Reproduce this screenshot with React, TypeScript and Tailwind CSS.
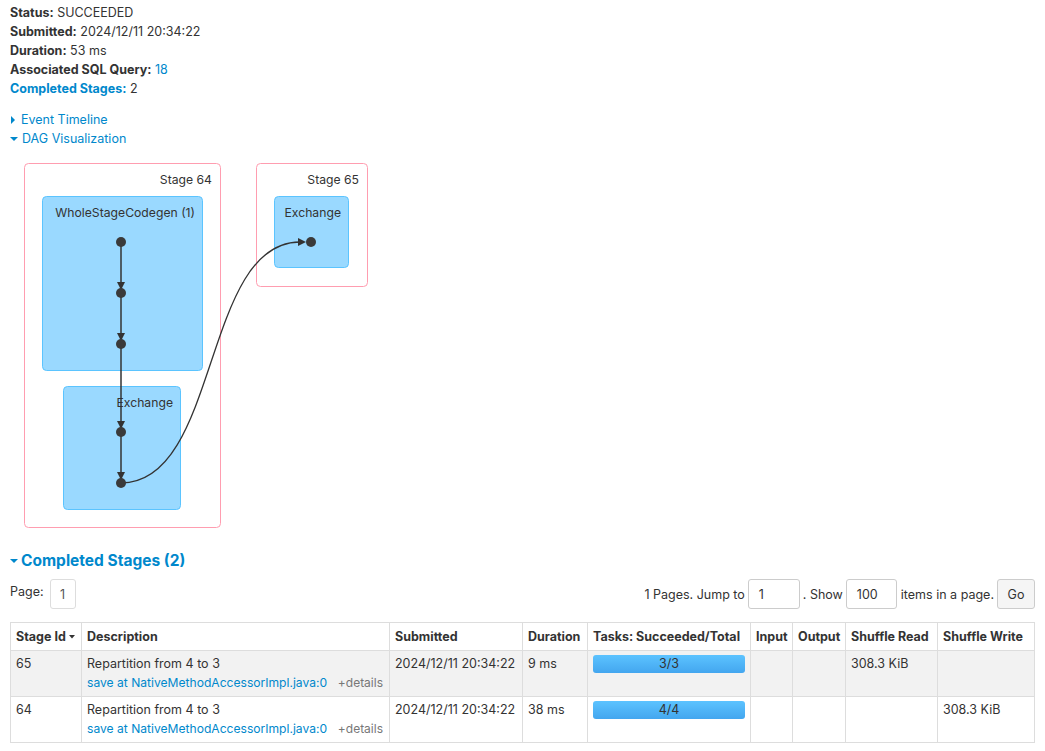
import React from "react";

const stages = [
  {
    id: "65",
    description: "Repartition from 4 to 3",
    callSite: "save at NativeMethodAccessorImpl.java:0",
    submitted: "2024/12/11 20:34:22",
    duration: "9 ms",
    tasks: "3/3",
    shuffleRead: "308.3 KiB",
    shuffleWrite: "",
  },
  {
    id: "64",
    description: "Repartition from 4 to 3",
    callSite: "save at NativeMethodAccessorImpl.java:0",
    submitted: "2024/12/11 20:34:22",
    duration: "38 ms",
    tasks: "4/4",
    shuffleRead: "",
    shuffleWrite: "308.3 KiB",
  },
];

const DownArrow = () => (
  <svg width="8" height="6" viewBox="0 0 8 6" className="inline-block">
    <polygon points="0,1 8,1 4,5" fill="currentColor" />
  </svg>
);

const RightArrow = () => (
  <svg width="6" height="8" viewBox="0 0 6 8" className="inline-block">
    <polygon points="1,0 5,4 1,8" fill="currentColor" />
  </svg>
);

function Arrow({ x, y }: { x: number; y: number }) {
  // tip at (x, y), pointing down
  return <polygon points={`${x - 4},${y - 8} ${x + 4},${y - 8} ${x},${y}`} fill="#333" />;
}

function DagViz() {
  const nodes = [94, 145, 196, 284, 335];
  return (
    <svg width="370" height="385" className="block" style={{ fontFamily: "Inter, 'Liberation Sans', sans-serif" }}>
      {/* stage 64 */}
      <rect x="14.5" y="15.5" width="196" height="364" rx="4" fill="#fff" stroke="#FF9DB0" />
      <text x="202" y="36" textAnchor="end" fontSize="12.2" fill="#333">Stage 64</text>
      <rect x="32.5" y="48.5" width="160" height="174" rx="4" fill="#9AD9FF" stroke="#5BC4FF" />
      <text x="185" y="69" textAnchor="end" fontSize="12.2" fill="#333">WholeStageCodegen (1)</text>
      <rect x="53.5" y="238.5" width="117" height="123" rx="4" fill="#9AD9FF" stroke="#5BC4FF" />
      <text x="163" y="259" textAnchor="end" fontSize="12.2" fill="#333">Exchange</text>

      {/* stage 65 */}
      <rect x="246.5" y="15.5" width="111" height="123" rx="4" fill="#fff" stroke="#FF9DB0" />
      <text x="349" y="36" textAnchor="end" fontSize="12.2" fill="#333">Stage 65</text>
      <rect x="264.5" y="48.5" width="74" height="71" rx="4" fill="#9AD9FF" stroke="#5BC4FF" />
      <text x="331" y="69" textAnchor="end" fontSize="12.2" fill="#333">Exchange</text>

      {/* edges */}
      {nodes.slice(0, -1).map((y, i) => (
        <g key={y}>
          <line x1="111" y1={y} x2="111" y2={nodes[i + 1] - 6} stroke="#333" strokeWidth="1.5" />
          <Arrow x={111} y={nodes[i + 1] - 3} />
        </g>
      ))}
      <path d="M111,335 C210,335 192,94 290,94" fill="none" stroke="#333" strokeWidth="1.3" />
      <polygon points="288,90 296,94 288,98" fill="#333" />

      {/* nodes */}
      {nodes.map((y) => (
        <circle key={y} cx="111" cy={y} r="5" fill="#3a3a3a" />
      ))}
      <circle cx="301" cy="94" r="5" fill="#3a3a3a" />
    </svg>
  );
}

export default function App() {
  const th = "border border-[#dddddd] px-[5px] text-left font-bold whitespace-nowrap";
  const td = "border border-[#dddddd] px-[5px] pt-[3px] align-top whitespace-nowrap";
  return (
    <div
      className="px-[10px] pt-[3px] text-[12.5px] leading-[19px] text-[#333]"
      style={{ fontFamily: "Inter, 'Liberation Sans', sans-serif" }}
    >
      {/* summary */}
      <ul>
        <li>
          <strong>Status:</strong> SUCCEEDED
        </li>
        <li>
          <strong>Submitted:</strong> 2024/12/11 20:34:22
        </li>
        <li>
          <strong>Duration:</strong> 53 ms
        </li>
        <li>
          <strong>Associated SQL Query:</strong> <span className="text-[#0088cc]">18</span>
        </li>
        <li>
          <strong className="text-[#0088cc]">Completed Stages:</strong> 2
        </li>
      </ul>

      <div className="mt-[12px] text-[#0088cc]">
        <div className="flex items-center gap-[5px]">
          <RightArrow />
          <span>Event Timeline</span>
        </div>
        <div className="flex items-center gap-[4px]">
          <DownArrow />
          <span>DAG Visualization</span>
        </div>
      </div>

      <DagViz />

      {/* completed stages */}
      <h4 className="mt-[18px] flex items-center gap-[3px] text-[15.5px] font-bold leading-[20px] text-[#0088cc]">
        <DownArrow />
        <span>Completed Stages (2)</span>
      </h4>

      <div className="mt-[8px] flex items-center justify-between">
        <div className="flex items-center gap-[6px]">
          <span className="-mt-[5px]">Page:</span>
          <span className="flex h-[30px] w-[26px] items-center justify-center rounded-[3px] border border-[#dddddd] text-[#555]">
            1
          </span>
        </div>
        <div className="flex items-center">
          <span>1 Pages. Jump to</span>
          <span className="ml-[3px] flex h-[30px] w-[52px] items-center rounded-[3px] border border-[#cccccc] px-[10px]">1</span>
          <span className="ml-[3px]">. Show</span>
          <span className="ml-[3px] flex h-[30px] w-[51px] items-center rounded-[3px] border border-[#cccccc] px-[10px]">100</span>
          <span className="ml-[4px]">items in a page.</span>
          <span className="ml-[3px] flex h-[30px] w-[38px] items-center justify-center rounded-[3px] border border-[#cccccc] bg-[#f5f5f5]">
            Go
          </span>
        </div>
      </div>

      <table className="mt-[13px] w-full table-fixed border-collapse">
        <thead>
          <tr className="h-[28px]">
            <th className={`${th} w-[71px]`}>
              <span className="flex items-center gap-[3px]">
                Stage Id
                <svg width="6" height="5" viewBox="0 0 6 5">
                  <polygon points="0,1 6,1 3,4.5" fill="#333" />
                </svg>
              </span>
            </th>
            <th className={`${th} w-[308px]`}>Description</th>
            <th className={`${th} w-[133px]`}>Submitted</th>
            <th className={`${th} w-[65px]`}>Duration</th>
            <th className={`${th} w-[163px]`}>Tasks: Succeeded/Total</th>
            <th className={`${th} w-[42px]`}>Input</th>
            <th className={`${th} w-[53px]`}>Output</th>
            <th className={`${th} w-[92px]`}>Shuffle Read</th>
            <th className={th}>Shuffle Write</th>
          </tr>
        </thead>
        <tbody>
          {stages.map((s, i) => (
            <tr key={s.id} className={`h-[46px] ${i % 2 === 0 ? "bg-[#f2f2f2]" : "bg-white"}`}>
              <td className={td}>{s.id}</td>
              <td className={td}>
                <div>{s.description}</div>
                <div className="flex items-baseline text-[12.1px]">
                  <span className="text-[#0088cc]">{s.callSite}</span>
                  <span className="ml-auto pr-[1px] text-[12px] text-[#777]">+details</span>
                </div>
              </td>
              <td className={td}>{s.submitted}</td>
              <td className={td}>{s.duration}</td>
              <td className={td}>
                <div className="mt-[1px] h-[18px] rounded-[3px] bg-gradient-to-b from-[#5cc3ff] to-[#43a6ef] text-center leading-[18px] text-[#333]">
                  {s.tasks}
                </div>
              </td>
              <td className={td}></td>
              <td className={td}></td>
              <td className={td}>{s.shuffleRead}</td>
              <td className={td}>{s.shuffleWrite}</td>
            </tr>
          ))}
        </tbody>
      </table>
    </div>
  );
}
